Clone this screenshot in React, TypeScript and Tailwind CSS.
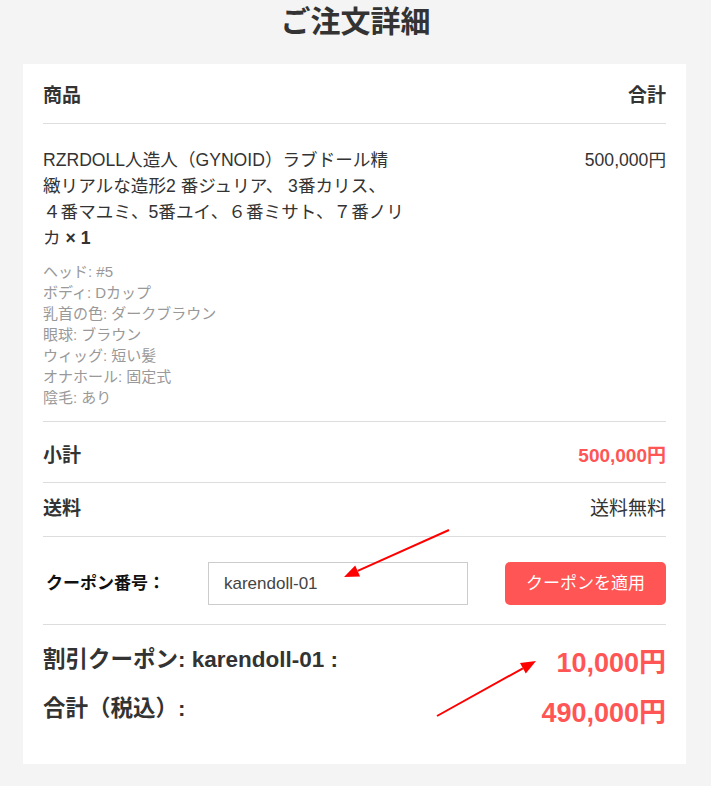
import React from "react";

const font = { fontFamily: '"Liberation Sans", "Noto Sans CJK JP", sans-serif' };

const meta = [
  "ヘッド: #5",
  "ボディ: Dカップ",
  "乳首の色: ダークブラウン",
  "眼球: ブラウン",
  "ウィッグ: 短い髪",
  "オナホール: 固定式",
  "陰毛: あり",
];

export default function App() {
  return (
    <div className="relative w-[728px] min-h-[786px] bg-white text-[#333]" style={font}>
      <div className="w-[711px] min-h-[786px] bg-[#f4f4f4] pt-[4px] pb-[22px]">
        <h1 className="text-center text-[30px] font-bold leading-[36px] text-[#333]">ご注文詳細</h1>
        <div className="ml-[23px] mt-[24px] w-[663px] bg-white px-[20px] pb-[36px]">
          {/* header */}
          <div className="flex justify-between border-b border-[#dddddd] pt-[20px] pb-[15px] text-[19px] font-bold leading-[24px]">
            <span>商品</span>
            <span>合計</span>
          </div>
          {/* product */}
          <div className="flex justify-between border-b border-[#dddddd] pt-[23px] pb-[13px]">
            <div className="w-[362px]">
              <p className="text-[17.6px] leading-[26px]">
                RZRDOLL人造人（GYNOID）ラブドール精緻リアルな造形2 番ジュリア、 3番カリス、 ４番マユミ、5番ユイ、６番ミサト、７番ノリカ<span className="font-bold"> × 1</span>
              </p>
              <div className="mt-[10px] text-[15px] leading-[21px] text-[#999]">
                {meta.map((m) => (
                  <div key={m}>{m}</div>
                ))}
              </div>
            </div>
            <div className="text-[17.6px] leading-[26px]">500,000円</div>
          </div>
          {/* subtotal */}
          <div className="flex justify-between border-b border-[#dddddd] pt-[22px] pb-[14px] leading-[24px]">
            <span className="text-[19px] font-bold">小計</span>
            <span className="text-[19px] font-bold text-[#ff5555]">500,000円</span>
          </div>
          {/* shipping */}
          <div className="flex justify-between border-b border-[#dddddd] pt-[14px] pb-[15px] leading-[24px]">
            <span className="text-[19px] font-bold">送料</span>
            <span className="text-[19px]">送料無料</span>
          </div>
          {/* coupon */}
          <div className="flex items-center border-b border-[#dddddd] pt-[25px] pb-[19px]">
            <span className="ml-[3px] w-[162px] text-[17px] font-bold text-[#111]">クーポン番号：</span>
            <div className="flex h-[43px] w-[260px] items-center border border-[#cccccc] px-[15px] text-[17px] text-[#444]">
              karendoll-01
            </div>
            <button className="ml-auto h-[43px] w-[161px] rounded-[5px] bg-[#ff5555] text-[17px] text-white">
              クーポンを適用
            </button>
          </div>
          {/* totals */}
          <div className="flex items-start justify-between pt-[20px] leading-[30px]">
            <span className="text-[22.5px] font-bold">割引クーポン: karendoll-01 :</span>
            <span className="mt-[3px] text-[27px] font-bold text-[#ff5555]">10,000円</span>
          </div>
          <div className="mt-[16px] flex items-start justify-between leading-[30px]">
            <span className="text-[22.5px] font-bold">合計（税込）:</span>
            <span className="mt-[4px] text-[27px] font-bold text-[#ff5555]">490,000円</span>
          </div>
        </div>
      </div>
      <svg
        className="pointer-events-none absolute left-0 top-0"
        width="728"
        height="786"
        viewBox="0 0 728 786"
      >
        <line x1="449" y1="530" x2="357.7" y2="570.9" stroke="#ff0000" strokeWidth="2" />
        <polygon points="344,577 360.1,576.4 355.2,565.4" fill="#ff0000" />
        <line x1="437" y1="716" x2="522.9" y2="668.3" stroke="#ff0000" strokeWidth="2" />
        <polygon points="536,661 525.8,673.5 520,663.1" fill="#ff0000" />
      </svg>
    </div>
  );
}
